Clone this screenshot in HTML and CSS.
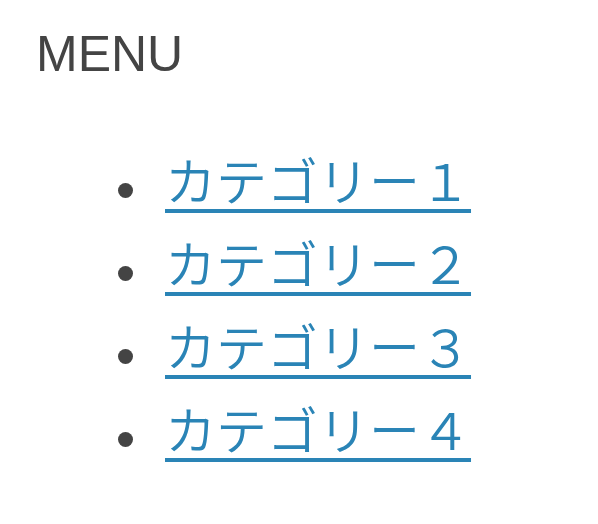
FILE: index.html
```html
<!DOCTYPE html>
<html lang="ja">
<head>
<meta charset="utf-8">
<link rel="stylesheet" href="styles.css">
</head>
<body>
<div class="menu">
  <h2 class="menu-title">MENU</h2>
  <ul class="menu-list">
    <li class="menu-item"><a href="#">カテゴリー１</a></li>
    <li class="menu-item"><a href="#">カテゴリー２</a></li>
    <li class="menu-item"><a href="#">カテゴリー３</a></li>
    <li class="menu-item"><a href="#">カテゴリー４</a></li>
  </ul>
</div>
</body>
</html>
```
FILE: styles.css
```css
html, body {
  margin: 0;
  padding: 0;
  background: #ffffff;
}
.menu {
  padding: 23px 0 0 36px;
  font-family: "Liberation Sans", "Noto Sans CJK JP", sans-serif;
  color: #444444;
}
.menu-title {
  margin: 0;
  font-size: 50px;
  font-weight: normal;
  line-height: 62px;
  color: #444444;
}
.menu-list {
  margin: 53px 0 0 0;
  padding: 0 0 0 82px;
  list-style: none;
  font-family: "Noto Sans CJK JP", sans-serif;
  font-size: 51px;
  line-height: 83px;
  font-weight: 350;
}
.menu-item {
  display: flex;
  align-items: flex-start;
  color: #444444;
}
.menu-item::before {
  content: "";
  flex: none;
  width: 15px;
  height: 15px;
  margin: 45px 32px 0 0;
  border-radius: 50%;
  background: #444444;
}
.menu-item a {
  color: #2a84b6;
  text-decoration: underline;
  text-decoration-thickness: 4px;
  text-underline-offset: 8px;
}
```
